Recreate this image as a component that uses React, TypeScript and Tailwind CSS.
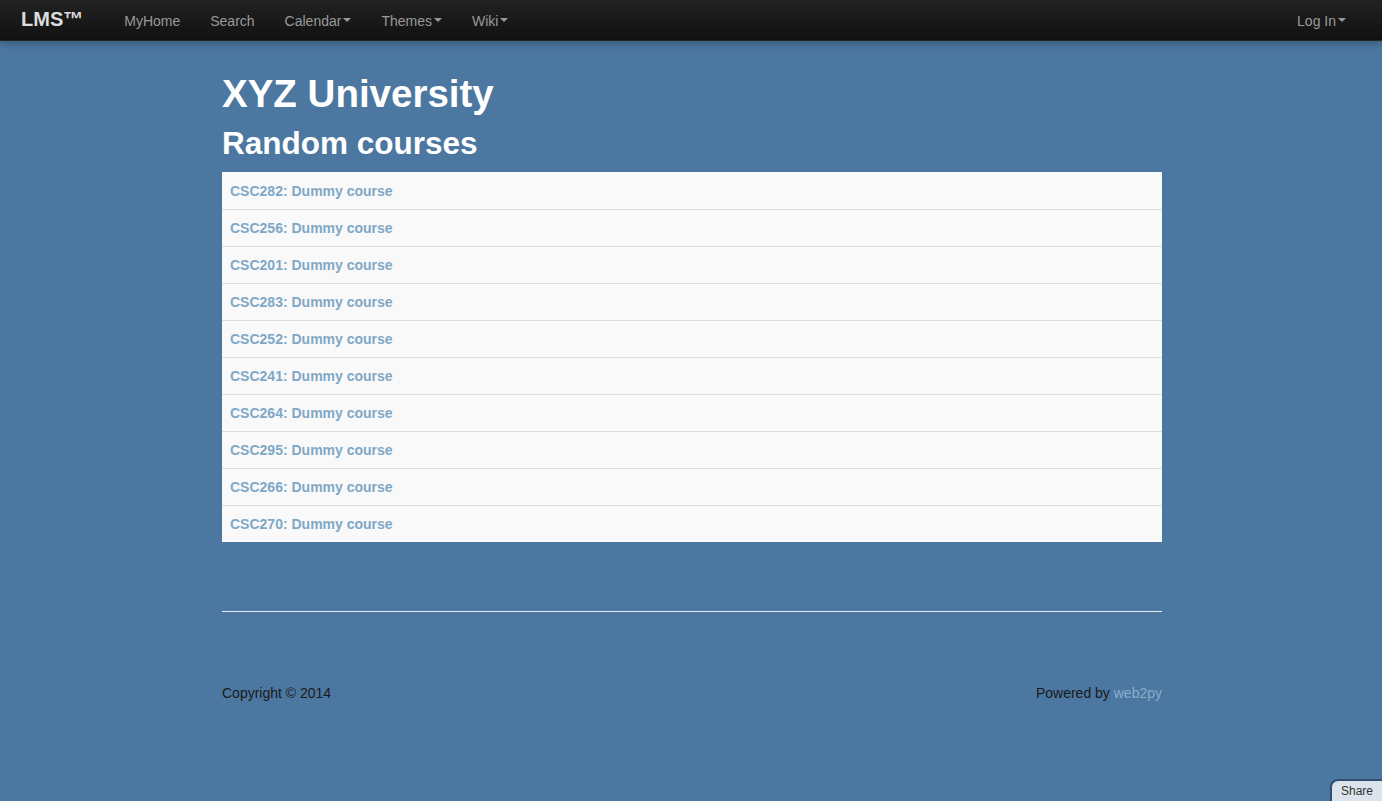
import React from "react";

const courses = ["CSC282", "CSC256", "CSC201", "CSC283", "CSC252", "CSC241", "CSC264", "CSC295", "CSC266", "CSC270"];

function Caret() {
  return (
    <span className="ml-[2px] inline-block h-0 w-0 border-l-[4px] border-r-[4px] border-t-[4px] border-l-transparent border-r-transparent border-t-[#999] align-middle relative top-[-1px]" />
  );
}

function NavLink({ label, caret }: { label: string; caret?: boolean }) {
  return (
    <a className="flex items-center px-[15px] h-[41px] pt-[2px] text-[14px] text-[#999] cursor-pointer">
      {label}
      {caret && <Caret />}
    </a>
  );
}

export default function App() {
  return (
    <div
      className="min-h-[801px] bg-[#4c77a0] relative"
      style={{ fontFamily: '"Liberation Sans", Arial, Helvetica, sans-serif' }}
    >
      <div className="h-[41px] bg-gradient-to-b from-[#222222] to-[#111111] border-b border-[#252525] flex items-center justify-between pl-[21px] pr-[21px] shadow-[0_1px_8px_rgba(0,0,0,0.35)]">
        <div className="flex items-center">
          <a className="text-[20px] font-bold text-[#dcdcdc] mr-[26px] leading-[20px] relative top-[-1px]">LMS™</a>
          <NavLink label="MyHome" />
          <NavLink label="Search" />
          <NavLink label="Calendar" caret />
          <NavLink label="Themes" caret />
          <NavLink label="Wiki" caret />
        </div>
        <div className="flex items-center">
          <NavLink label="Log In" caret />
        </div>
      </div>

      <div className="pl-[2px]">
        <div className="w-[940px] mx-auto pt-[33px]">
          <h1 className="text-[38.5px] leading-[40px] font-bold text-white mb-[9px]">XYZ University</h1>
          <h2 className="text-[31.5px] leading-[40px] font-bold text-white mb-[9px]">Random courses</h2>
          <div className="bg-[#f9f9f9]">
            {courses.map((c, i) => (
              <div
                key={c}
                className={`h-[37px] border-t ${i === 0 ? "border-[#f9f9f9]" : "border-[#dddddd]"} px-[8px] flex items-center`}
              >
                <a className="text-[14px] font-bold text-[#80a8c6] leading-[20px] cursor-pointer">{c}: Dummy course</a>
              </div>
            ))}
          </div>
          <div className="mt-[69px] h-[1px] bg-[#e6edf4]" />
          <div className="mt-[71px] flex justify-between text-[14px] text-[#1a1a1a] leading-[20px]">
            <span>Copyright © 2014</span>
            <span>
              Powered by <a className="text-[#86aecb]">web2py</a>
            </span>
          </div>
        </div>
      </div>

      <div className="absolute right-0 bottom-0 w-[52px] h-[22px] bg-[#dbe3ec] rounded-tl-[8px] border-l-[2px] border-t-[2px] border-[#2f4f70] flex items-center justify-center text-[12px] text-[#333]">
        Share
      </div>
    </div>
  );
}
